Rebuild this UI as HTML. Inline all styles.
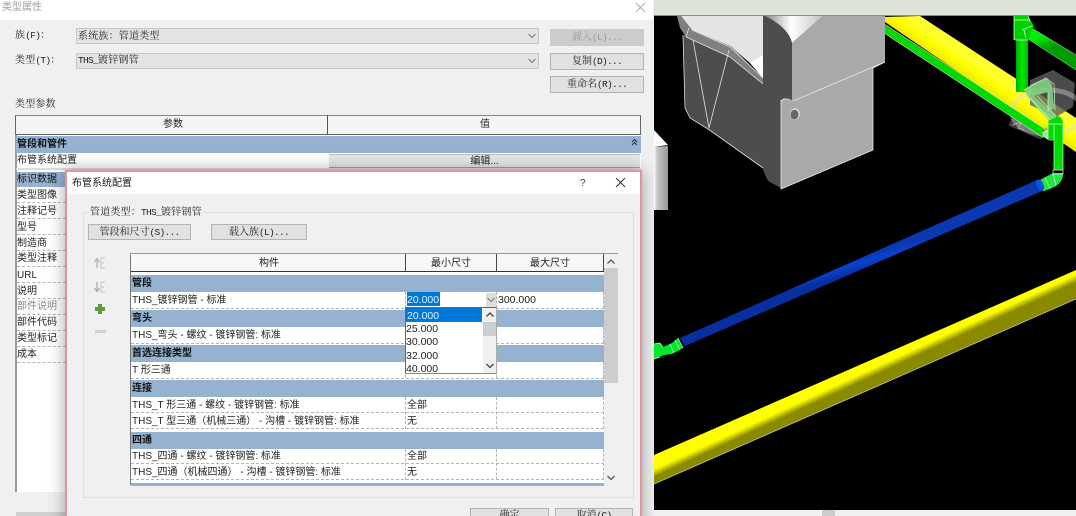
<!DOCTYPE html>
<html lang="zh"><head><meta charset="utf-8"><title>类型属性</title>
<style>
html,body{margin:0;padding:0;width:1076px;height:516px;overflow:hidden;background:#f0f0f0}
#r{position:absolute;left:0;top:0;width:1076px;height:516px;overflow:hidden;font-family:"Liberation Sans","Noto Sans CJK SC",sans-serif;font-size:10px;color:#222;filter:blur(.35px)}
#r div,#r span.t{position:absolute;box-sizing:border-box}
.t{white-space:nowrap;line-height:14px}
.s{font-family:"Liberation Serif","Noto Serif CJK SC",serif;letter-spacing:.2px}
.s i{font-style:normal;font-family:"Liberation Mono",monospace;font-size:9.5px;letter-spacing:-.7px}
.b{font-weight:bold;color:#111}
.btn{background:#e1e1e1;border:1px solid #b4b4b4;text-align:center;line-height:16px;white-space:nowrap;font-family:"Liberation Serif","Noto Serif CJK SC",serif}
.btn i{font-style:normal;font-family:"Liberation Mono",monospace;font-size:9.5px;letter-spacing:-.7px}
.sec{background:#96b2d1}
.dh{border-bottom:1px dashed #b4b4b4;height:1px}
.dv{border-left:1px dashed #b4b4b4;width:1px}
.n{font-size:10.5px}
</style></head><body><div id="r">

<!-- back dialog -->
<div style="left:0;top:0;width:654px;height:516px;background:#f0f0f0"></div>
<div style="left:0;top:0;width:653px;height:20px;background:#fff"></div>
<span class="t" style="left:2px;top:0;color:#a0a0a0;margin-top:1px">类型属性</span>
<svg style="position:absolute;left:635px;top:2px" width="11" height="11"><path d="M1 1L10 10M10 1L1 10" stroke="#aaa" fill="none"/></svg>

<span class="t s" style="left:15px;top:29px">族<i>(F)</i>：</span>
<span class="t s" style="left:15px;top:54px">类型<i>(T)</i>：</span>
<div style="left:76px;top:28px;width:463px;height:16px;background:#e3e3e3;border:1px solid #c8c8c8"></div>
<div style="left:76px;top:53px;width:463px;height:16px;background:#e3e3e3;border:1px solid #c8c8c8"></div>
<span class="t s" style="left:78px;top:30px">系统族：管道类型</span>
<span class="t s" style="left:78px;top:54px"><i>THS_</i>镀锌钢管</span>
<svg style="position:absolute;left:527px;top:32px" width="10" height="8"><path d="M1.500 2L5 5.500L8.500 2" stroke="#777" fill="none"/></svg>
<svg style="position:absolute;left:527px;top:57px" width="10" height="8"><path d="M1.500 2L5 5.500L8.500 2" stroke="#777" fill="none"/></svg>
<div class="btn" style="left:550px;top:29px;width:94px;height:17px;background:#ccc;border-color:#ccc;color:#999">载入<i>(L)...</i></div>
<div class="btn" style="left:550px;top:53px;width:94px;height:17px">复制<i>(D)...</i></div>
<div class="btn" style="left:550px;top:76px;width:94px;height:17px">重命名<i>(R)...</i></div>
<span class="t s" style="left:15px;top:98px">类型参数</span>

<div style="left:15px;top:115px;width:626px;height:377px;background:#fff;border-left:2px solid #999"></div>
<div style="left:15px;top:115px;width:626px;height:20px;background:#f4f4f4;border:1px solid #666;border-top-color:#888"></div>
<div style="left:327px;top:115px;width:1px;height:20px;background:#555"></div>
<span class="t" style="left:163px;top:118px">参数</span>
<span class="t" style="left:480px;top:118px">值</span>
<div class="sec" style="left:16px;top:136px;width:625px;height:17px"></div>
<span class="t b" style="left:17px;top:138px">管段和管件</span>
<svg style="position:absolute;left:631px;top:138px" width="7" height="9"><path d="M1 4L3.500 1.500L6 4M1 7L3.500 4.500L6 7" stroke="#234" fill="none"/></svg>
<span class="t" style="left:17px;top:154px">布管系统配置</span>
<div class="btn" style="left:329px;top:154px;width:311px;height:14px;line-height:13px;background:#e6e6e6;border:0;border-bottom:1px solid #9a9;border-top:1px solid #bbb;font-family:inherit">编辑...</div>
<div style="left:16px;top:168px;width:625px;height:2px;background:#ddd"></div>

<div class="sec" style="left:17px;top:172px;width:49px;height:15px"></div>
<span class="t b" style="left:17px;top:173px;font-weight:normal">标识数据</span>
<span class="t" style="left:17px;top:189px">类型图像</span>
<span class="t" style="left:17px;top:205px">注释记号</span>
<span class="t" style="left:17px;top:221px">型号</span>
<span class="t" style="left:17px;top:237px">制造商</span>
<span class="t" style="left:17px;top:252px">类型注释</span>
<span class="t" style="left:17px;top:269px">URL</span>
<span class="t" style="left:17px;top:285px">说明</span>
<span class="t" style="left:17px;top:300px;color:#888">部件说明</span>
<span class="t" style="left:17px;top:316px">部件代码</span>
<span class="t" style="left:17px;top:332px">类型标记</span>
<span class="t" style="left:17px;top:348px">成本</span>
<div class="dh" style="left:17px;top:202px;width:49px"></div>
<div class="dh" style="left:17px;top:218px;width:49px"></div>
<div class="dh" style="left:17px;top:234px;width:49px"></div>
<div class="dh" style="left:17px;top:250px;width:49px"></div>
<div class="dh" style="left:17px;top:266px;width:49px"></div>
<div class="dh" style="left:17px;top:282px;width:49px"></div>
<div class="dh" style="left:17px;top:298px;width:49px"></div>
<div class="dh" style="left:17px;top:314px;width:49px"></div>
<div class="dh" style="left:17px;top:330px;width:49px"></div>
<div class="dh" style="left:17px;top:346px;width:49px"></div>
<div class="dh" style="left:17px;top:362px;width:49px"></div>
<div style="left:16px;top:512px;width:50px;height:4px;background:#d0d0d0"></div>

<!-- inner dialog -->
<div style="left:65px;top:170px;width:577px;height:360px;background:#f0f0f0;border:2px solid #e0949d;box-shadow:0 0 16px rgba(0,0,0,.35)"></div>
<div style="left:67px;top:172px;width:573px;height:22px;background:#fff"></div>
<span class="t" style="left:72px;top:177px">布管系统配置</span>
<span class="t" style="left:580px;top:177px;color:#444">?</span>
<svg style="position:absolute;left:615px;top:177px" width="11" height="11"><path d="M1 1L10 10M10 1L1 10" stroke="#333" fill="none"/></svg>

<div style="left:83px;top:212px;width:551px;height:286px;border:1px solid #dfdfdf"></div>
<span class="t s" style="left:89px;top:206px;background:#f0f0f0;padding:0 1px">管道类型：<i>THS_</i>镀锌钢管</span>
<div class="btn" style="left:88px;top:224px;width:103px;height:16px">管段和尺寸<i>(S)...</i></div>
<div class="btn" style="left:211px;top:224px;width:96px;height:16px">载入族<i>(L)...</i></div>

<svg style="position:absolute;left:92px;top:254px" width="18" height="84" fill="none">
<g stroke="#c4c4c4"><path d="M5 14V5M2.500 8L5 4.500L7.500 8" stroke="#b4b4b4" stroke-width="1.300"/><path d="M13 4H9V14H13M9 9H12"/>
<path d="M5 28V37M2.500 34L5 37.500L7.500 34" stroke="#aaa" stroke-width="1.300"/><path d="M13 28H9V38H13M9 33H12"/></g>
<path d="M8 50V60M3 55H13" stroke="#5f9a3c" stroke-width="4"/>
<path d="M3 77.500H14" stroke="#d0d0d0" stroke-width="3"/>
</svg>

<!-- table -->
<div style="left:130px;top:253px;width:488px;height:232px;background:#fff;border-left:1px solid #777"></div>
<div style="left:130px;top:253px;width:488px;height:1.500px;background:#999"></div>
<div style="left:131px;top:254px;width:473px;height:18px;background:#f7f7f7;border-bottom:1px solid #333"></div>
<div style="left:405px;top:254px;width:1px;height:18px;background:#444"></div>
<div style="left:496px;top:254px;width:1px;height:18px;background:#444"></div>
<div style="left:603px;top:254px;width:1px;height:18px;background:#444"></div>
<span class="t" style="left:259px;top:257px">构件</span>
<span class="t" style="left:431px;top:257px">最小尺寸</span>
<span class="t" style="left:530px;top:257px">最大尺寸</span>

<div class="sec" style="left:131px;top:275px;width:473px;height:17px"></div>
<div class="sec" style="left:131px;top:310px;width:473px;height:17px"></div>
<div class="sec" style="left:131px;top:345px;width:473px;height:17px"></div>
<div class="sec" style="left:131px;top:380px;width:473px;height:17px"></div>
<div class="sec" style="left:131px;top:432px;width:473px;height:17px"></div>
<div class="sec" style="left:131px;top:483px;width:473px;height:3px"></div>
<div style="left:604px;top:272px;width:14px;height:214px;background:#f0f0f0"></div>
<div style="left:604px;top:268px;width:14px;height:115px;background:#cdcdcd"></div>
<div style="left:604px;top:254px;width:14px;height:14px;background:#f0f0f0"></div>
<svg style="position:absolute;left:606px;top:258px" width="10" height="8"><path d="M1.500 5.500L5 2L8.500 5.500" stroke="#555" stroke-width="1.300" fill="none"/></svg>
<svg style="position:absolute;left:606px;top:474px" width="10" height="8"><path d="M1.500 2L5 5.500L8.500 2" stroke="#555" stroke-width="1.300" fill="none"/></svg>

<div class="dh" style="left:131px;top:308px;width:473px"></div>
<div class="dh" style="left:131px;top:343px;width:473px"></div>
<div class="dh" style="left:131px;top:378px;width:473px"></div>
<div class="dh" style="left:131px;top:412px;width:473px"></div>
<div class="dh" style="left:131px;top:428px;width:473px"></div>
<div class="dh" style="left:131px;top:463px;width:473px"></div>
<div class="dh" style="left:131px;top:479px;width:473px"></div>
<div class="dv" style="left:405px;top:292px;height:16px"></div><div class="dv" style="left:496px;top:292px;height:16px"></div><div class="dv" style="left:603px;top:292px;height:16px"></div>
<div class="dv" style="left:405px;top:327px;height:16px"></div><div class="dv" style="left:496px;top:327px;height:16px"></div><div class="dv" style="left:603px;top:327px;height:16px"></div>
<div class="dv" style="left:405px;top:362px;height:16px"></div><div class="dv" style="left:496px;top:362px;height:16px"></div><div class="dv" style="left:603px;top:362px;height:16px"></div>
<div class="dv" style="left:405px;top:397px;height:32px"></div><div class="dv" style="left:496px;top:397px;height:32px"></div><div class="dv" style="left:603px;top:397px;height:32px"></div>
<div class="dv" style="left:405px;top:449px;height:31px"></div><div class="dv" style="left:496px;top:449px;height:31px"></div><div class="dv" style="left:603px;top:449px;height:31px"></div>

<span class="t b" style="left:132px;top:277px">管段</span>
<span class="t" style="left:132px;top:294px">THS_镀锌钢管 - 标准</span>
<span class="t b" style="left:132px;top:312px">弯头</span>
<span class="t" style="left:132px;top:329px">THS_弯头 - 螺纹 - 镀锌钢管: 标准</span>
<span class="t b" style="left:132px;top:347px">首选连接类型</span>
<span class="t" style="left:132px;top:364px">T 形三通</span>
<span class="t b" style="left:132px;top:382px">连接</span>
<span class="t" style="left:132px;top:399px">THS_T 形三通 - 螺纹 - 镀锌钢管: 标准</span>
<span class="t" style="left:132px;top:415px">THS_T 型三通（机械三通） - 沟槽 - 镀锌钢管: 标准</span>
<span class="t b" style="left:132px;top:434px">四通</span>
<span class="t" style="left:132px;top:450px">THS_四通 - 螺纹 - 镀锌钢管: 标准</span>
<span class="t" style="left:132px;top:466px">THS_四通（机械四通） - 沟槽 - 镀锌钢管: 标准</span>
<span class="t" style="left:407px;top:399px">全部</span>
<span class="t" style="left:407px;top:415px">无</span>
<span class="t" style="left:407px;top:450px">全部</span>
<span class="t" style="left:407px;top:466px">无</span>

<!-- edit combo -->
<div style="left:407px;top:292px;width:33px;height:14px;background:#0078d7"></div>
<span class="t n" style="left:407px;top:293px;color:#e6f2ff">20.000</span>
<div style="left:486px;top:293px;width:10px;height:14px;background:#ddd"></div>
<svg style="position:absolute;left:486px;top:296px" width="10" height="8"><path d="M1.500 2L5 5.500L8.500 2" stroke="#777" fill="none"/></svg>
<span class="t n" style="left:498px;top:293px">300.000</span>
<div style="left:405px;top:307px;width:92px;height:67px;background:#fff;border:1px solid #666;border-right-color:#aaa;border-bottom-color:#888"></div>
<div style="left:406px;top:308px;width:76px;height:14px;background:#0078d7"></div>
<span class="t n" style="left:407px;top:309px;color:#e6f2ff">20.000</span>
<span class="t n" style="left:406px;top:322px">25.000</span>
<span class="t n" style="left:406px;top:335px">30.000</span>
<span class="t n" style="left:406px;top:349px">32.000</span>
<span class="t n" style="left:406px;top:362px">40.000</span>
<div style="left:483px;top:308px;width:13px;height:65px;background:#f0f0f0"></div>
<div style="left:483px;top:322px;width:13px;height:14px;background:#cdcdcd"></div>
<svg style="position:absolute;left:485px;top:311px" width="10" height="8"><path d="M1.500 5.500L5 2L8.500 5.500" stroke="#444" stroke-width="1.300" fill="none"/></svg>
<svg style="position:absolute;left:485px;top:362px" width="10" height="8"><path d="M1.500 2L5 5.500L8.500 2" stroke="#444" stroke-width="1.300" fill="none"/></svg>

<div class="btn" style="left:470px;top:508px;width:79px;height:16px;line-height:14px">确定</div>
<div class="btn" style="left:555px;top:508px;width:78px;height:16px;line-height:14px">取消<i>(C)</i></div>

<!-- 3D viewport -->
<svg style="position:absolute;left:0;top:0" width="1076" height="516" viewBox="0 0 1076 516">
<defs>
<linearGradient id="gw" x1="0" y1="0" x2="1" y2="0"><stop offset="0" stop-color="#8a8a8a"/><stop offset=".45" stop-color="#fff"/><stop offset="1" stop-color="#c4c4c4"/></linearGradient>
<linearGradient id="gs" x1="0" y1="0" x2="1" y2="0"><stop offset="0" stop-color="#fff"/><stop offset=".2" stop-color="#c8c8c8"/><stop offset="1" stop-color="#999"/></linearGradient>
<linearGradient id="gy" gradientUnits="userSpaceOnUse" x1="912" y1="54" x2="928" y2="30"><stop offset="0" stop-color="#8a8a00"/><stop offset=".35" stop-color="#e8e800"/><stop offset=".7" stop-color="#ffff00"/><stop offset="1" stop-color="#ffff30"/></linearGradient>
<linearGradient id="gy2" gradientUnits="userSpaceOnUse" x1="860" y1="382" x2="848" y2="356"><stop offset="0" stop-color="#8a8a00"/><stop offset=".25" stop-color="#ffff00"/><stop offset="1" stop-color="#ffff00"/></linearGradient>
<linearGradient id="gb" gradientUnits="userSpaceOnUse" x1="860" y1="272" x2="856" y2="258"><stop offset="0" stop-color="#082fa0"/><stop offset=".6" stop-color="#0a42d0"/><stop offset="1" stop-color="#0a38b0"/></linearGradient>
<linearGradient id="gg" x1="0" y1="0" x2="1" y2="0"><stop offset="0" stop-color="#00a800"/><stop offset=".5" stop-color="#00ee00"/><stop offset="1" stop-color="#00b800"/></linearGradient>
<linearGradient id="gg2" gradientUnits="userSpaceOnUse" x1="1045" y1="35" x2="1050" y2="48"><stop offset="0" stop-color="#00ee00"/><stop offset="1" stop-color="#009c00"/></linearGradient>
</defs>
<rect x="654" y="0" width="422" height="510" fill="#000"/>
<rect x="654" y="0" width="422" height="15" fill="#dbe4d6"/>
<rect x="654" y="15" width="422" height="1" fill="#8b9088"/>
<rect x="654" y="510" width="422" height="6" fill="#f0f0f0"/>
<rect x="822" y="510" width="13" height="6" fill="#ccc"/>

<!-- small left piece -->
<path d="M654 147L668 146V210H654Z" fill="url(#gs)"/>
<path d="M654 130L668 145L654 147Z" fill="#fff"/>

<!-- hood left -->
<path d="M683 35L685 108L690 118L708 129L763 168V82L732 50L692 36Z" fill="#4d4d4d"/>
<path d="M681 16H763V78L750 63L730 46L692 30Z" fill="#e4e4e4"/>
<path d="M750 63L763 55V78Z" fill="#fff"/>
<path d="M677 16L680 28L686 37L730 57L763 84V78L732 47L692 30L681 16Z" fill="#808080"/>
<path d="M683 35L685 108L690 118L708 129L763 168M686 37L730 57L763 84M692 30L730 47L763 78M693 40L709 128L729 50M689 28L686 37" stroke="#e0e0e0" fill="none" stroke-width=".8"/>

<!-- center block -->
<path d="M763 16H786L792 43V100H781V188L768 181L763 170Z" fill="#4d4d4d"/>
<path d="M792 43L823 16H885V62L873 68V150L781 189V100L784 98L792 101Z" fill="#a9a9a9"/>
<path d="M765 16H823L792 43C790 32 778 22 765 16Z" fill="url(#gw)"/>
<path d="M793 101L885 62L873 68M781 100V189L873 150V68" stroke="#e8e8e8" fill="none" stroke-width=".8"/>
<path d="M781 102C783 98 788 98 792 101" stroke="#ddd" fill="none" stroke-width=".8"/>
<ellipse cx="795" cy="114" rx="5" ry="5.500" fill="#ddd"/>
<ellipse cx="794.500" cy="114.500" rx="4" ry="4.800" fill="#666"/>

<!-- yellow top -->
<path d="M885 17L885 22L1076 152V118L920 16Z" fill="url(#gy)"/>
<!-- ghost cube -->
<path d="M1030 80L1053 70L1075 83L1073 107L1056 117L1030 105Z" fill="#5e5e5e" opacity=".8"/>
<path d="M1010 122L1040 135L1055 128" stroke="#777" stroke-width="8" fill="none" opacity=".5"/>
<path d="M1012 125L1022 122L1018 128L1024 130" stroke="#999" stroke-width="1" fill="none"/>
<ellipse cx="1048" cy="112" rx="36" ry="22" fill="none" stroke="#d8d8d8" stroke-width="5" opacity=".4"/>

<!-- green main -->
<path d="M885 25L1043 128V137L885 33Z" fill="#00dc00"/>
<path d="M885 24.500L1043 127.500M885 33.500L1043 137.500" stroke="#c8f5c0" stroke-width=".7" fill="none"/>
<path d="M1030 27L1076 55V70L1025 37Z" fill="url(#gg2)"/>
<path d="M1030 27L1076 55M1025 37L1076 70" stroke="#bfeebb" stroke-width=".5" fill="none"/>
<rect x="1016" y="16" width="12" height="76" fill="url(#gg)"/>
<path d="M1014 16V40H1028L1034 26L1028 16Z" fill="#00d200"/>
<path d="M1014 20H1030M1015 40H1028M1014 16V40M1028 16L1030 22M1022 30L1032 26M1026 38L1024 30" stroke="#d8f8d8" stroke-width=".8" fill="none"/>

<!-- ghost fitted pieces -->
<path d="M1024 90L1032 84L1046 78L1052 84L1054 108L1048 112L1048 92L1034 96L1056 116L1050 122L1030 100Z" fill="#7fd07f" opacity=".9"/>
<path d="M1024 90L1046 78L1054 84L1055 110M1048 92L1048 112M1030 98L1050 120M1037 96L1056 116" stroke="#d5f0d5" stroke-width=".7" fill="none"/>
<path d="M1049 130H1053V140H1049L1043 136L1043 132Z" fill="#9ee69e"/>
<path d="M1043 132L1049 130H1053V140H1049L1043 136Z" stroke="#e0f5e0" stroke-width=".7" fill="none"/>

<!-- vertical green -->
<path d="M1048 121L1058 116C1061 117 1063 120 1063 124V170H1054V140H1048Z" fill="#00dc00"/>
<path d="M1048 121V139M1054 124V170M1063 124V170M1048 124H1063" stroke="#d8f8d8" stroke-width=".7" fill="none"/>
<path d="M1038 181L1053 173H1063V176C1061 184 1056 187 1044 191Z" fill="#20e840"/>
<path d="M1053 170H1063V174H1053ZM1038 181L1044 191M1045 178L1050 188M1053 173L1056 186" stroke="#d8f8d8" stroke-width=".7" fill="none"/>

<!-- blue -->
<path d="M680 338L1037 180L1042 191L685 346Z" fill="url(#gb)"/>
<ellipse cx="1040" cy="185" rx="3.500" ry="6" fill="#0a50e8" transform="rotate(-24 1040 185)"/>

<!-- left green fitting -->
<path d="M654 344L660 343L663 347L672 343L678 338L683 348L672 354L664 355L654 359Z" fill="#00ea2c"/>
<path d="M654 344L660 343L663 347M654 359L660 357M670 344L674 353M678 338L683 348M675 340L680 350" stroke="#c8f5c8" stroke-width=".7" fill="none"/>

<!-- yellow bottom -->
<path d="M654 455L1008 300L1076 270V299L654 484Z" fill="url(#gy2)"/>
<path d="M654 484L1076 299" stroke="#c8c48a" stroke-width=".8" fill="none"/>
</svg>
</div></body></html>
